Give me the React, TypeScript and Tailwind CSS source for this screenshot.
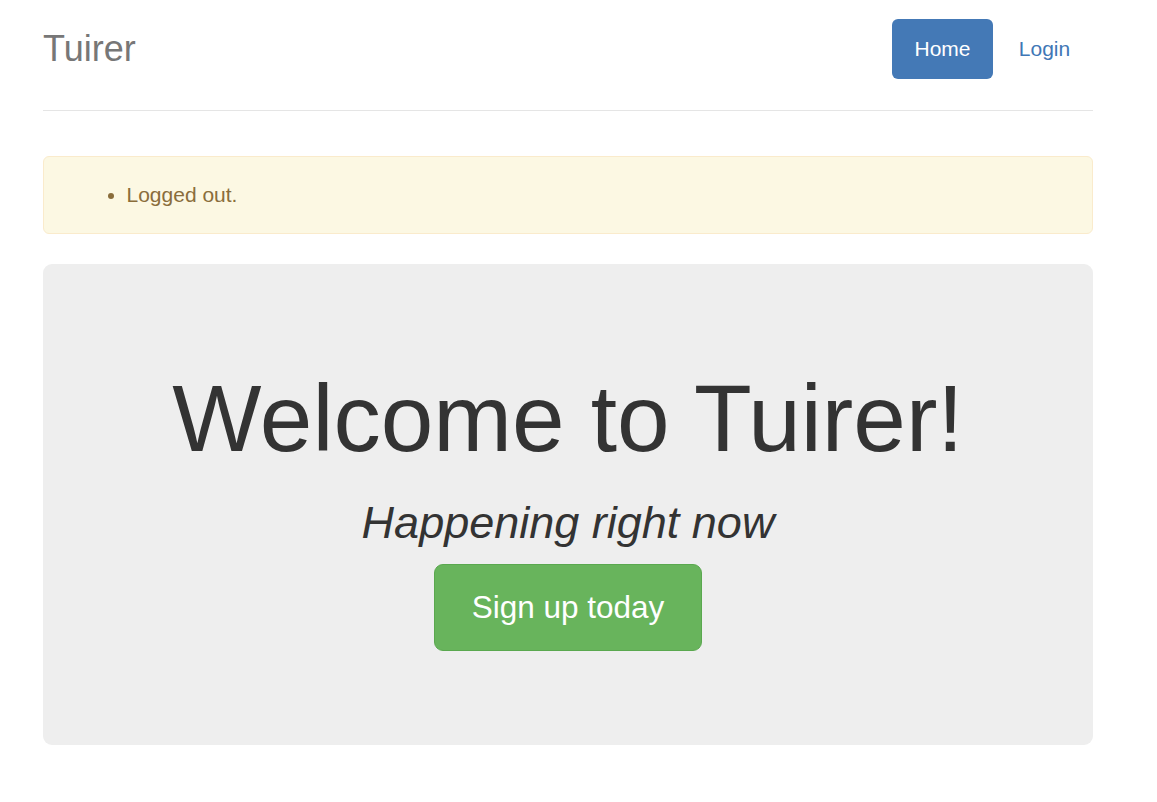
import React from 'react';

const App = () => {
    return (
        <div className="w-[1157px] min-h-[802px] bg-white font-['Liberation_Sans',Arial,sans-serif]">
            <div className="w-[1050px] ml-[43px]">
                <header className="flex flex-row justify-between items-start pt-[19px] h-[111px] border-b border-[#e5e5e5]">
                    <h3 className="text-[36px] leading-[60px] text-[#777]">Tuirer</h3>
                    <nav className="flex flex-row gap-[3px]">
                        <a className="w-[101px] h-[60px] text-center leading-[60px] rounded-[6px] bg-[#4479b6] text-white text-[21px]">Home</a>
                        <a className="w-[97px] h-[60px] text-center leading-[60px] rounded-[6px] text-[#3f77b6] text-[21px]">Login</a>
                    </nav>
                </header>

                <div className="mt-[45px] h-[78px] px-[22.5px] pt-[22.5px] bg-[#fcf8e3] border border-[#faebcc] rounded-[6px] text-[#8a6d3b]">
                    <ul className="list-disc pl-[60px] text-[21px] leading-[30px]">
                        <li>Logged out.</li>
                    </ul>
                </div>

                <div className="mt-[30px] h-[481px] bg-[#eeeeee] rounded-[9px] flex flex-col items-center pt-[102px] text-[#333]">
                    <h1 className="text-[94.5px] leading-[104px]">Welcome to Tuirer!</h1>
                    <h2 className="mt-[28px] text-[45px] leading-[49.5px] italic">Happening right now</h2>
                    <button className="mt-[16.5px] h-[87px] w-[268px] rounded-[9px] bg-[#68b45c] border border-[#5aa84f] text-white text-[31.5px]">
                        Sign up today
                    </button>
                </div>
            </div>
        </div>
    );
};

export default App;
